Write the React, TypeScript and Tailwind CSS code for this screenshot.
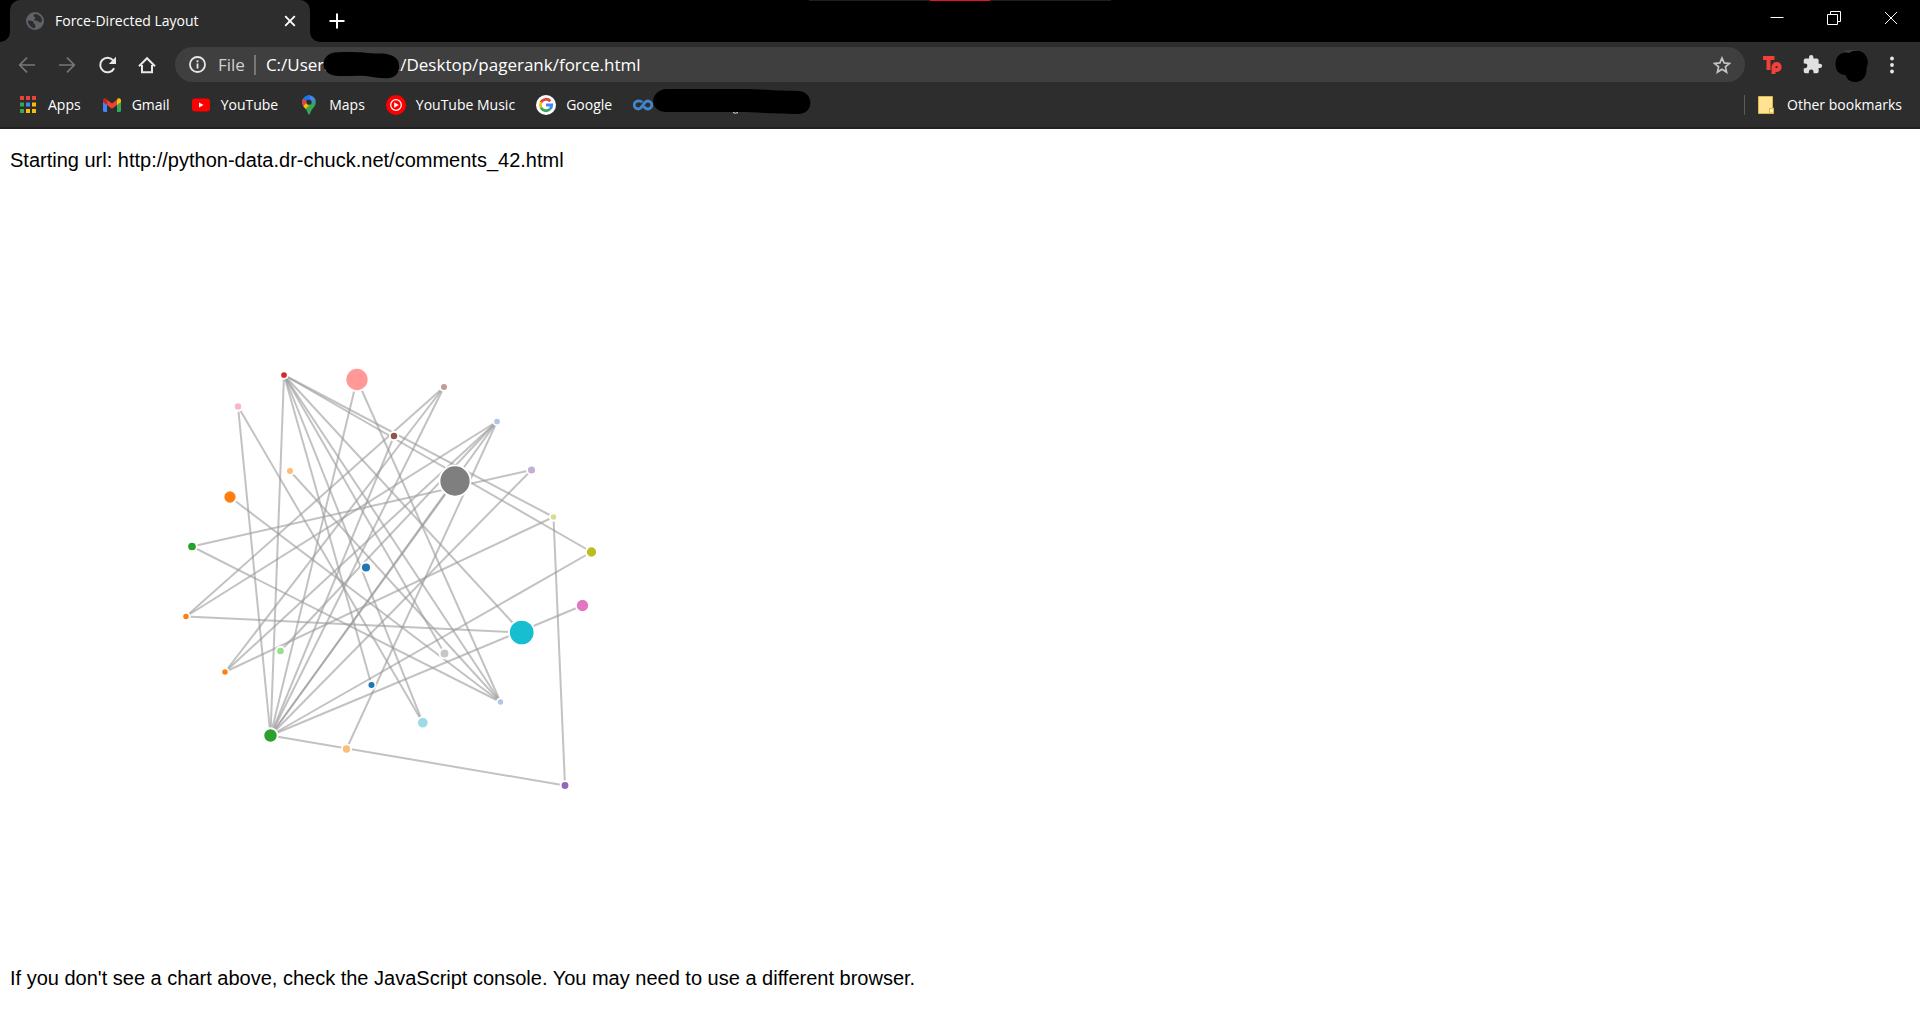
import type { ReactNode } from "react";

type Node = { x: number; y: number; r: number; fill: string };

const nodes: Record<string, Node> = {
  red: { x: 284, y: 375, r: 3.8, fill: "#d62728" },
  salmon: { x: 357, y: 379.5, r: 11.6, fill: "#ff9896" },
  blush: { x: 238, y: 406.5, r: 4.2, fill: "#f7b6d2" },
  brown: { x: 394, y: 436, r: 4.2, fill: "#8c564b" },
  peach: { x: 290, y: 471, r: 4, fill: "#ffbb78" },
  orange: { x: 230, y: 497, r: 6.6, fill: "#ff7f0e" },
  green: { x: 192, y: 546.5, r: 4.8, fill: "#2ca02c" },
  blue: { x: 366, y: 567.5, r: 5, fill: "#1f77b4" },
  rose: { x: 444, y: 387, r: 4, fill: "#c49c94" },
  sky: { x: 497, y: 421.5, r: 3.8, fill: "#aec7e8" },
  gray: { x: 455, y: 481, r: 15.6, fill: "#7f7f7f" },
  lavender: { x: 531.5, y: 470, r: 4.5, fill: "#c5b0d5" },
  lime: { x: 553.5, y: 517, r: 3.7, fill: "#dbdb8d" },
  olive: { x: 591.5, y: 552, r: 5.6, fill: "#bcbd22" },
  tangerine: { x: 186, y: 616.5, r: 3.7, fill: "#ff7f0e" },
  pumpkin: { x: 225, y: 672, r: 3.7, fill: "#ff7f0e" },
  mint: { x: 280.5, y: 651, r: 4.3, fill: "#98df8a" },
  forest: { x: 270.5, y: 735.5, r: 7.2, fill: "#2ca02c" },
  apricot: { x: 346.5, y: 749, r: 4.6, fill: "#ffbb78" },
  navy: { x: 371.5, y: 685, r: 4, fill: "#1f77b4" },
  silver: { x: 444.5, y: 653.5, r: 4.9, fill: "#c7c7c7" },
  cyan: { x: 521.7, y: 632.5, r: 12.8, fill: "#17becf" },
  magenta: { x: 582.5, y: 605.5, r: 6.6, fill: "#e377c2" },
  powder: { x: 500.5, y: 702, r: 3.6, fill: "#aec7e8" },
  aqua: { x: 422.8, y: 722.7, r: 5.8, fill: "#9edae5" },
  purple: { x: 565, y: 785.5, r: 4.4, fill: "#9467bd" },
};

const links: [string, string][] = [
  ["red", "forest"], ["red", "navy"], ["red", "aqua"], ["red", "silver"], ["red", "powder"],
  ["red", "cyan"], ["red", "olive"], ["red", "lime"], ["blush", "forest"], ["blush", "aqua"],
  ["salmon", "forest"], ["salmon", "powder"], ["brown", "forest"], ["peach", "powder"],
  ["orange", "powder"], ["green", "powder"], ["green", "lavender"], ["rose", "tangerine"],
  ["rose", "pumpkin"], ["rose", "forest"], ["sky", "tangerine"], ["sky", "pumpkin"],
  ["sky", "mint"], ["sky", "forest"], ["sky", "apricot"], ["gray", "forest"],
  ["lavender", "forest"], ["lime", "pumpkin"], ["lime", "purple"], ["olive", "forest"],
  ["cyan", "tangerine"], ["magenta", "forest"], ["purple", "forest"],
];

function ForceGraph() {
  return (
    <svg width="1125" height="750" viewBox="10 192 1125 750" role="img" aria-label="Page rank graph">
      <g stroke="#999" strokeOpacity="0.6" strokeWidth="2">
        {links.map(([a, b]) => (
          <line key={a + b} x1={nodes[a].x} y1={nodes[a].y} x2={nodes[b].x} y2={nodes[b].y} />
        ))}
      </g>
      <g stroke="#fff" strokeWidth="1.9">
        {Object.entries(nodes).map(([id, n]) => (
          <circle key={id} cx={n.x} cy={n.y} r={n.r} fill={n.fill} />
        ))}
      </g>
    </svg>
  );
}

function GlobeIcon() {
  return (
    <svg width="18" height="18" viewBox="0 0 18 18">
      <circle cx="9" cy="9" r="9" fill="#5f6368" />
      <path d="M2 8.6c2 .2 4.200 0 5.200 1.100.9 1 .3 2 1.600 2.700 1.200.6.500 1.800.1 3.800C5 16 2 12.800 2 8.600z" fill="#2d2d2d" />
      <path d="M8.500 2c-.8 1.300-1.300 1.600-.8 2.500.4.700 1.700.3 1.700 1.400 0 1-1.600.9-1.400 2 .3 1 2.300.6 3.500 1.100 1.300.5 1.500 1.600 2.800 1.400.8-.1 1.300-.6 1.700-1.400C16 5 13 2 8.500 2z" fill="#2d2d2d" />
    </svg>
  );
}

function AppsIcon() {
  const colors = ["#ea4335", "#ea4335", "#ea4335", "#34a853", "#4285f4", "#fbbc04", "#34a853", "#fbbc04", "#fbbc04"];
  return (
    <svg width="20" height="20" viewBox="0 0 20 20">
      {colors.map((c, i) => (
        <rect key={i} x={2 + (i % 3) * 6} y={1 + Math.floor(i / 3) * 6.5} width="4" height="4" fill={c} />
      ))}
    </svg>
  );
}

function GmailIcon() {
  return (
    <svg width="20" height="20" viewBox="0 0 20 20">
      <path d="M1 6v9.500q0 1.500 1.500 1.500H5V9z" fill="#4285f4" />
      <path d="M15 9v8h2.500q1.500 0 1.500-1.500V6z" fill="#34a853" />
      <path d="M15 5v5l4-3V5.400c0-2-2-2.800-3.400-1.800z" fill="#fbbc04" />
      <path d="M5 10V4.700l5 3.800 5-3.800V10l-5 3.700z" fill="#ea4335" />
      <path d="M1 5.400V7l4 3V4.800l-.9-1C2.800 2.700 1 3.500 1 5.400z" fill="#c5221f" />
    </svg>
  );
}

function YouTubeIcon() {
  return (
    <svg width="20" height="20" viewBox="0 0 20 20">
      <rect x="1" y="3.500" width="18" height="13" rx="3" fill="#f00" />
      <path d="M8 7.500v5l4.500-2.500z" fill="#fff" />
    </svg>
  );
}

function MapsIcon() {
  return (
    <svg width="20" height="20" viewBox="0 0 20 20">
      <clipPath id="pin">
        <path d="M10 .500a6.800 6.800 0 0 1 6.800 6.800c0 3.300-2 4.700-3.800 7.200-1.600 2.300-1.800 5-3 5s-1.400-2.700-3-5C5.200 12 3.200 10.600 3.200 7.300A6.800 6.800 0 0 1 10 .500z" />
      </clipPath>
      <g clipPath="url(#pin)">
        <rect width="20" height="20" fill="#34a853" />
        <path d="M0 14L14 0H0z" fill="#1a73e8" />
        <path d="M8 0h12L9 9z" fill="#4285f4" />
        <path d="M0 0l10 8-6 5H0z" fill="#ea4335" />
        <path d="M6 0h6L9 8 4.500 3z" fill="#1a73e8" />
        <path d="M3 12.800L10 5l5 0-9.500 10z" fill="#fbbc04" />
        <path d="M12 .500L17 4l-5.500 6L9 6z" fill="#4285f4" />
      </g>
      <circle cx="10" cy="7.200" r="2.600" fill="#2d2d2d" />
    </svg>
  );
}

function YouTubeMusicIcon() {
  return (
    <svg width="20" height="20" viewBox="0 0 20 20">
      <circle cx="10" cy="10" r="10" fill="#f00" />
      <circle cx="10" cy="10" r="5.300" fill="none" stroke="#fff" strokeWidth="1.200" />
      <path d="M8.200 7.200v5.600l4.600-2.800z" fill="#fff" />
    </svg>
  );
}

function GoogleIcon() {
  return (
    <svg width="20" height="20" viewBox="0 0 20 20">
      <circle cx="10" cy="10" r="10" fill="#fff" />
      <g fill="none" strokeWidth="2.800">
        <path d="M14.300 6.200A5.700 5.700 0 0 0 5 7.300" stroke="#ea4335" />
        <path d="M5 7.300a5.700 5.700 0 0 0 0 5.400" stroke="#fbbc04" />
        <path d="M5 12.700a5.700 5.700 0 0 0 8.800 1.600" stroke="#34a853" />
        <path d="M13.800 14.300A5.700 5.700 0 0 0 15.700 10H10" stroke="#4285f4" />
      </g>
    </svg>
  );
}

function CourseraIcon() {
  return (
    <svg width="20" height="20" viewBox="0 0 20 20" fill="none" stroke="#3f86cc" strokeWidth="2.800">
      <path d="M9.200 7.300C7.500 5.600 5.800 6 5.200 6a3.900 3.900 0 0 0 0 8c4.600 0 5-8 9.600-8a3.900 3.900 0 0 1 0 8c-2 0-3.200-1.300-4-2.700" />
    </svg>
  );
}

function IconButton({ label, children }: { label: string; children: ReactNode }) {
  return (
    <button aria-label={label} className="flex h-9 w-9 items-center justify-center">
      {children}
    </button>
  );
}

function WindowButton({ label, children }: { label: string; children: ReactNode }) {
  return (
    <button aria-label={label} className="flex h-9 w-[57px] items-center justify-center">
      <svg width="14" height="14" viewBox="0 0 14 14" fill="none" stroke="#fff">
        {children}
      </svg>
    </button>
  );
}

function Bookmark({ icon, children }: { icon: ReactNode; children?: ReactNode }) {
  return (
    <a href="#" className="flex items-center gap-2.5 whitespace-nowrap">
      {icon}
      {children}
    </a>
  );
}

function TabStrip() {
  return (
    <div className="relative flex h-[42px] items-start bg-black">
      <div className="absolute top-0 left-1/2 flex h-px w-[302px] -translate-x-1/2 justify-center bg-[#1f1f1f]">
        <div className="h-px w-[60px] bg-[#e81123]" />
      </div>
      <div className="flex h-full w-2.5 items-end bg-black">
        <div className="size-2.5 bg-[#2d2d2d]">
          <div className="size-2.5 rounded-br-[10px] bg-black" />
        </div>
      </div>
      <div className="flex h-full w-[300px] items-center rounded-t-[10px] bg-[#2d2d2d] pr-3 pl-4">
        <GlobeIcon />
        <span className="ml-[11px] flex-1 text-sm text-white">Force-Directed Layout</span>
        <button aria-label="Close tab" className="flex size-4 items-center justify-center">
          <svg width="12" height="12" viewBox="0 0 12 12" stroke="#fff" strokeWidth="1.900">
            <path d="M1.200 1.200l9.600 9.600M10.800 1.200L1.200 10.800" />
          </svg>
        </button>
      </div>
      <div className="flex h-full w-2.5 items-end">
        <div className="size-2.5 bg-[#2d2d2d]">
          <div className="size-2.5 rounded-bl-[10px] bg-black" />
        </div>
      </div>
      <button aria-label="New tab" className="flex h-full w-[34px] items-center justify-center">
        <svg width="16" height="16" viewBox="0 0 16 16" stroke="#fff" strokeWidth="2">
          <path d="M8 .500v15M.500 8h15" />
        </svg>
      </button>
      <div className="mr-px ml-auto flex">
        <WindowButton label="Minimize">
          <path d="M.500 6.500h13" />
        </WindowButton>
        <WindowButton label="Restore">
          <path d="M.500 3.500h10v10h-10zM3.500 3.500v-3h10v10h-3" />
        </WindowButton>
        <WindowButton label="Close">
          <path d="M1 1l12 12M13 1L1 13" />
        </WindowButton>
      </div>
    </div>
  );
}

function Toolbar() {
  return (
    <div className="flex h-[45px] items-center bg-[#2d2d2d] pr-[10px] pl-[9px]">
      <div className="flex gap-1">
        <IconButton label="Back">
          <svg width="18" height="18" viewBox="0 0 18 18" fill="none" stroke="#777" strokeWidth="1.700">
            <path d="M17 9H2M9 1.700L1.700 9 9 16.300" />
          </svg>
        </IconButton>
        <IconButton label="Forward">
          <svg width="18" height="18" viewBox="0 0 18 18" fill="none" stroke="#777" strokeWidth="1.700">
            <path d="M1 9h15M9 1.700L16.300 9 9 16.300" />
          </svg>
        </IconButton>
        <IconButton label="Reload">
          <svg width="18" height="18" viewBox="0 0 18 18" fill="none" stroke="#e8e8e8" strokeWidth="2">
            <path d="M16.100 12.200A7.300 7.300 0 1 1 15.300 4.500" />
            <path d="M18 .800V8h-7.200z" fill="#e8e8e8" stroke="none" />
          </svg>
        </IconButton>
        <IconButton label="Home">
          <svg width="18" height="18" viewBox="0 0 18 18" fill="none" stroke="#e8e8e8" strokeWidth="2">
            <path d="M1 10.200L9 2.200l8 8M4 9v7.200h10V9" />
          </svg>
        </IconButton>
      </div>
      <div className="ml-[10px] flex h-[35px] flex-1 items-center rounded-full bg-[#3f3f3f] pr-[14px] pl-[14px]">
        <svg width="17" height="17" viewBox="0 0 17 17" fill="none" stroke="#e8e8e8" strokeWidth="1.800">
          <circle cx="8.500" cy="8.500" r="7.500" />
          <path d="M8.500 7.500v5M8.500 4.300v1.900" />
        </svg>
        <span className="ml-3 text-[17px] text-[#d0d0d0]">File</span>
        <span className="ml-[9px] mr-2.5 h-5 w-0.5 bg-[#777]" />
        <div className="relative flex-1">
          <input
            aria-label="Address"
            className="w-full bg-transparent text-[17px] text-white outline-none"
            defaultValue={"C:/Users             n/Desktop/pagerank/force.html"}
          />
          <svg className="absolute top-0 left-14" width="82" height="28" viewBox="0 0 82 28">
            <path d="M12 .500C25-.500 38 0 46 1s16-.500 22 2c13 3 12 21 0 23-8 1-16-1-24-2-12-1-22 1-32-.500-14-3-14-20 0-23z" fill="#000" />
          </svg>
        </div>
        <button aria-label="Bookmark this page">
          <svg width="18" height="18" viewBox="0 0 18 18" fill="none" stroke="#c4c4c4" strokeWidth="1.700">
            <path d="M9 2l2.100 4.900 5.300.500-4 3.500 1.200 5.200L9 13.300l-4.600 2.800 1.200-5.200-4-3.500 5.300-.500z" />
          </svg>
        </button>
      </div>
      <div className="ml-[9px] flex gap-1">
        <IconButton label="Extension">
          <svg width="20" height="20" viewBox="0 0 20 20" fill="none" stroke="#f4403a" strokeWidth="4">
            <path d="M1 3h11.500M6.500 3v12" />
            <path d="M11.500 19v-7a3.100 3.100 0 1 1 3.100 3.100h-1.500" />
          </svg>
        </IconButton>
        <IconButton label="Extensions">
          <svg width="21" height="21" viewBox="0 0 24 24" fill="#e0e0e0">
            <path d="M20.500 11H19V7a2 2 0 0 0-2-2h-4V3.500a2.500 2.500 0 0 0-5 0V5H4a2 2 0 0 0-2 2v3.800h1.500a2.700 2.700 0 0 1 0 5.400H2V20a2 2 0 0 0 2 2h3.800v-1.500a2.700 2.700 0 0 1 5.400 0V22H17a2 2 0 0 0 2-2v-4h1.500a2.500 2.500 0 0 0 0-5z" />
          </svg>
        </IconButton>
        <IconButton label="Profile">
          <svg width="34" height="34" viewBox="0 0 34 34">
            <path d="M8 3l6-1 9 0 4 2-6 1H12z" fill="#3d4038" />
            <path d="M14 5c5-3 14-4 18 5 2 5 0 8-.500 11 .500 8-5 13-11 13-7 0-9-4-10-7C4 27 0 22 .500 15 1 7 8 3 14 5z" fill="#000" />
          </svg>
        </IconButton>
        <IconButton label="Menu">
          <svg width="4" height="18" viewBox="0 0 4 18" fill="#e8e8e8">
            <circle cx="2" cy="2.500" r="1.900" />
            <circle cx="2" cy="9" r="1.900" />
            <circle cx="2" cy="15.500" r="1.900" />
          </svg>
        </IconButton>
      </div>
    </div>
  );
}

function BookmarksBar() {
  return (
    <nav aria-label="Bookmarks" className="flex h-[42px] items-center border-b-2 border-[#212121] bg-[#2d2d2d] px-[18px] pb-1 text-sm text-white">
      <div className="flex items-center gap-[21px]">
        <Bookmark icon={<AppsIcon />}>Apps</Bookmark>
        <Bookmark icon={<GmailIcon />}>Gmail</Bookmark>
        <Bookmark icon={<YouTubeIcon />}>YouTube</Bookmark>
        <Bookmark icon={<MapsIcon />}>Maps</Bookmark>
        <Bookmark icon={<YouTubeMusicIcon />}>YouTube Music</Bookmark>
        <Bookmark icon={<GoogleIcon />}>Google</Bookmark>
        <div className="relative">
          <Bookmark icon={<CourseraIcon />} />
          <svg className="absolute -top-1.5 left-5" width="158" height="26" viewBox="0 0 158 26">
            <path d="M13 0H90c20 0 30 2 55 2 16 0 17 23 0 23-25 0-40-2-60-2H12C-4 22-4 2 13 0z" fill="#000" />
            <path d="M80 23.500q2.500 1.500 5 0" stroke="#ddd" fill="none" />
          </svg>
        </div>
      </div>
      <div className="ml-auto flex items-center">
        <span className="mr-3 h-5 w-px bg-[#5a5a5a]" />
        <Bookmark
          icon={
            <svg width="20" height="20" viewBox="0 0 20 20">
              <path d="M1.500 1.500h14V13h1v5.500h-15z" fill="#ffe392" stroke="#d9b94a" />
              <path d="M12.500 18v-4.500h4V18z" fill="#fff0b8" stroke="#e0bb3c" />
            </svg>
          }
        >
          Other bookmarks
        </Bookmark>
      </div>
    </nav>
  );
}

export default function App() {
  return (
    <div className="min-h-screen bg-white">
      <header className="font-['Segoe_UI','Open_Sans',sans-serif]">
        <TabStrip />
        <Toolbar />
        <BookmarksBar />
      </header>
      <main className="px-2.5 pt-5 font-['Liberation_Sans',Arial,sans-serif] text-[20px] leading-[23px] text-black">
        <p className="mb-5">Starting url: http://python-data.dr-chuck.net/comments_42.html</p>
        <ForceGraph />
        <p className="mt-[25px]">
          If you don't see a chart above, check the JavaScript console. You may need to use a different browser.
        </p>
      </main>
    </div>
  );
}
